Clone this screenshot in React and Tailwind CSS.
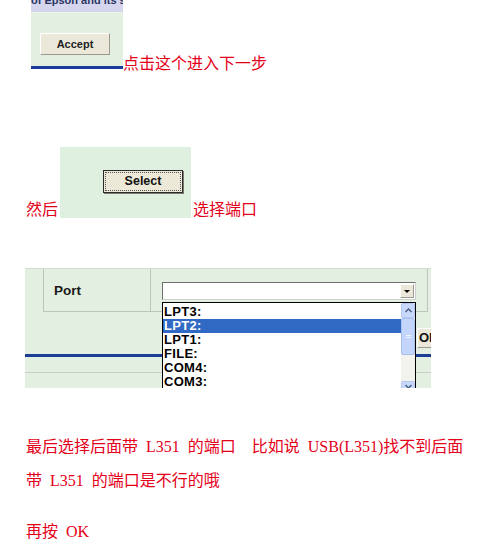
import React from 'react';

const XP_FONT = { fontFamily: '"Liberation Sans", Arial, sans-serif' };

const AcceptShot = () => (
  <div className="flex h-[69px] w-[92px] flex-col overflow-hidden bg-[#e2efe1]" style={XP_FONT}>
    {/* cropped title strip */}
    <div className="h-[12px] overflow-hidden bg-[#d5d6ee]">
      <div className="-mt-[7px] whitespace-nowrap text-[11px] font-bold leading-[14px] text-[#2b3563]">of Epson and its s</div>
    </div>
    <div className="h-px bg-[#eef3ee]" />
    <div className="flex-1 pl-[9px] pt-[20px]">
      <div className="flex h-[22px] w-[70px] items-center justify-center border border-t-white border-l-white border-r-[#9c9a90] border-b-[#9c9a90] bg-[#ebe8d9] text-[11px] font-bold text-[#1e1e1e]">
        Accept
      </div>
    </div>
    <div className="h-[3px] bg-[#1a3b99]" />
  </div>
);

const SelectShot = () => (
  <div className="mx-[2px] h-[71px] w-[131px] bg-[#e0f0e0] pl-[43px] pt-[23px]" style={XP_FONT}>
    <div className="h-[23px] w-[80px] border border-[#2b2b2b] bg-[#ece9d8] p-px shadow-[1px_1px_0_#7a7a70]">
      <div className="flex h-full w-full items-center justify-center border border-dotted border-[#555] text-[12.5px] font-bold text-[#111]">
        Select
      </div>
    </div>
  </div>
);

const ports = ['LPT3:', 'LPT2:', 'LPT1:', 'FILE:', 'COM4:', 'COM3:'];

const PortShot = () => (
  <div className="relative h-[120px] w-[406px] overflow-hidden bg-[#e3efe1]" style={XP_FONT}>
    <div className="h-px bg-[#d4dcd2]" />
    {/* table row */}
    <div className="ml-[18px] flex h-[43px] w-[385px] border-b border-l border-r border-[#bcc6ba]">
      <div className="flex w-[107px] items-center border-r border-[#bcc6ba] pl-[10px] pt-[3px] text-[13.5px] font-bold text-[#1a1a1a]">
        Port
      </div>
      <div className="pl-[11px] pt-[13px]">
        <div className="flex h-[18px] w-[254px] items-center justify-end border border-t-[#6f6f6f] border-l-[#6f6f6f] border-r-[#cfcfcf] border-b-[#cfcfcf] bg-white pr-px">
          <div className="flex h-[14px] w-[14px] items-center justify-center border border-t-white border-l-white border-r-[#9c9a90] border-b-[#9c9a90] bg-[#ebe8d9]">
            <div className="h-0 w-0 border-l-[3px] border-r-[3px] border-t-[3px] border-l-transparent border-r-transparent border-t-black" />
          </div>
        </div>
      </div>
    </div>
    {/* OK button peeking from behind the list */}
    <div className="mt-[16px] pl-[392px]">
      <div className="flex h-[20px] w-[40px] items-center border border-t-white border-l-white border-r-[#9c9a90] border-b-[#9c9a90] bg-[#ebe8d9] pl-[1px] text-[13px] font-bold text-[#111]">
        OK
      </div>
    </div>
    <div className="mt-[6px] h-[3px] bg-[#1c3d95]" />
    <div className="mt-[15px] h-px bg-[#c9cfc8]" />

    {/* open dropdown list */}
    <div className="absolute left-[137px] top-[34px] flex h-[92px] w-[254px] border border-black bg-white">
      <div className="flex-1 pt-[2px]">
        {ports.map((p, i) => (
          <div
            key={p}
            className={
              i === 1
                ? 'h-[14px] bg-[#316ac5] pl-[1px] text-[13px] font-bold leading-[14px] tracking-[0.3px] text-white'
                : 'h-[14px] pl-[1px] text-[13px] font-bold leading-[14px] tracking-[0.3px] text-black'
            }
          >
            {p}
          </div>
        ))}
      </div>
      <div className="flex w-[14px] flex-col bg-[#f3f3ee]">
        <div className="flex h-[15px] items-center justify-center rounded-[2px] border border-[#b5c8f3] bg-[#c8d8fb]">
          <svg width="7" height="5" viewBox="0 0 7 5">
            <path d="M0.5 4 L3.5 1 L6.5 4" fill="none" stroke="#4d6185" strokeWidth="1.5" />
          </svg>
        </div>
        <div className="flex h-[37px] flex-col items-center justify-center gap-[1px] rounded-[2px] border border-[#a9c0ef] bg-[#c3d5fb]">
          <div className="h-px w-[5px] bg-[#eef3ff]" />
          <div className="h-px w-[5px] bg-[#eef3ff]" />
        </div>
        <div className="flex-1" />
        <div className="flex h-[12px] items-start justify-center rounded-[2px] border border-[#b5c8f3] bg-[#c8d8fb] pt-[2px]">
          <svg width="7" height="5" viewBox="0 0 7 5">
            <path d="M0.5 1 L3.5 4 L6.5 1" fill="none" stroke="#4d6185" strokeWidth="1.5" />
          </svg>
        </div>
      </div>
    </div>
  </div>
);

const App = () => {
  return (
    <div
      className="h-[552px] w-[500px] overflow-hidden bg-white text-[16px] text-[#e5001a]"
      style={{ fontFamily: '"Liberation Serif", "Noto Sans CJK SC", serif' }}
    >
      <div className="flex items-end pl-[31px]">
        <AcceptShot />
        <span className="mb-[-3px] leading-[16px]">点击这个进入下一步</span>
      </div>

      <div className="mt-[78px] flex items-end pl-[26px]">
        <span className="leading-[16px]">然后</span>
        <SelectShot />
        <span className="leading-[16px]">选择端口</span>
      </div>

      <div className="mt-[50px] pl-[25px]">
        <PortShot />
      </div>

      <p className="mt-[42px] pl-[26px] leading-[34px] [word-spacing:4px]">
        最后选择后面带 L351 的端口&nbsp; 比如说 USB(L351)找不到后面
        <br />
        带 L351 的端口是不行的哦
      </p>

      <p className="mt-[17px] pl-[26px] leading-[34px] [word-spacing:4px]">再按 OK</p>
    </div>
  );
};

export default App;
